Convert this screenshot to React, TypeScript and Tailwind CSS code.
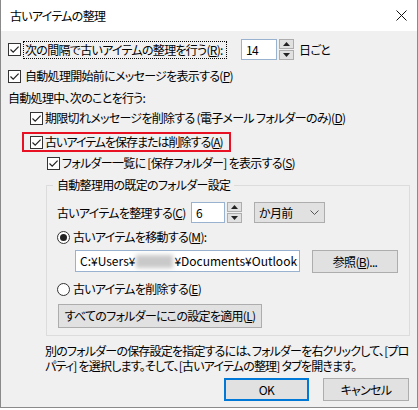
import React from "react"

const font = "font-['Noto_Sans_CJK_JP',sans-serif] [font-feature-settings:'palt'] tracking-[-0.7px] whitespace-nowrap"

function Check() {
  return (
    <span className="flex h-[13px] w-[13px] shrink-0 items-center justify-center border border-[#333] bg-white">
      <svg width="11" height="11" viewBox="0 0 11 11">
        <path d="M1.5 5.5 L4.2 8.2 L9.6 2.6" stroke="#222" strokeWidth="1.2" fill="none" />
      </svg>
    </span>
  )
}

function Radio({ on }: { on?: boolean }) {
  return (
    <span className="flex h-[13px] w-[13px] shrink-0 items-center justify-center rounded-full border border-[#333] bg-white">
      {on && <span className="h-[7px] w-[7px] rounded-full bg-[#222]" />}
    </span>
  )
}

function Spin() {
  return (
    <div className="ml-[2px] flex flex-col gap-[1px]">
      <span className="flex h-[10px] w-[15px] items-center justify-center border border-[#adadad] bg-[#e1e1e1]">
        <svg width="7" height="4" viewBox="0 0 7 4">
          <path d="M0 4 L3.5 0 L7 4 Z" fill="#222" />
        </svg>
      </span>
      <span className="flex h-[10px] w-[15px] items-center justify-center border border-[#adadad] bg-[#e1e1e1]">
        <svg width="7" height="4" viewBox="0 0 7 4">
          <path d="M0 0 L3.5 4 L7 0 Z" fill="#222" />
        </svg>
      </span>
    </div>
  )
}

export default function App() {
  return (
    <div className={`h-[410px] w-[418px] bg-white text-[12px] leading-[18px] text-black ${font}`}>
      <div className="h-[408px] border-x border-b border-[#8a8a8a] bg-[#f0f0f0]">
        <div className="flex h-[31px] items-center justify-between bg-white pl-[9px] pr-[10px]">
          <span>古いアイテムの整理</span>
          <svg width="11" height="11" viewBox="0 0 11 11">
            <path d="M0.5 0.5 L10.5 10.5 M10.5 0.5 L0.5 10.5" stroke="#111" strokeWidth="1" />
          </svg>
        </div>

        <div className="pl-[7px]">
          <div className="mt-[8px] flex h-[21px] items-center">
            <Check />
            <span className="ml-[2px] flex h-[18px] w-[204px] items-center border border-dotted border-black pl-[1px]">
              次の間隔で古いアイテムの整理を行う(<u>R</u>):
            </span>
            <span className="ml-[14px] flex h-[21px] w-[36px] items-center border border-[#98b2d0] bg-white pl-[4px]">14</span>
            <Spin />
            <span className="ml-[5px]">日ごと</span>
          </div>

          <div className="mt-[7px] flex h-[18px] items-center gap-[4px]">
            <Check />
            <span>自動処理開始前にメッセージを表示する(<u>P</u>)</span>
          </div>

          <div className="mt-[4px] flex h-[18px] items-center">自動処理中、次のことを行う:</div>

          <div className="ml-[22px] mt-[2px] flex h-[18px] items-center gap-[2px]">
            <Check />
            <span>期限切れメッセージを削除する (電子メール フォルダーのみ)(<u>D</u>)</span>
          </div>

          <div className="ml-[14px] mt-[5px] flex h-[20px] w-[209px] items-center gap-[2px] border-2 border-[#e81123] pl-[6px]">
            <Check />
            <span className="tracking-[-1px]">古いアイテムを保存または削除する(<u>A</u>)</span>
          </div>

          <div className="ml-[39px] mt-[2px] flex h-[18px] items-center gap-[2px]">
            <Check />
            <span>フォルダー一覧に [保存フォルダー] を表示する(<u>S</u>)</span>
          </div>

          <fieldset className="ml-[38px] mt-[4px] w-[364px] border border-[#dcdcdc] pb-[7px] pl-[10px]">
            <legend className="-ml-[4px] px-[4px] leading-[18px]">自動整理用の既定のフォルダー設定</legend>

            <div className="mt-[8px] flex h-[21px] items-center">
              <span className="w-[134px]">
                古いアイテムを整理する(<u>C</u>)
              </span>
              <span className="flex h-[21px] w-[34px] items-center border border-[#98b2d0] bg-white pl-[4px]">6</span>
              <Spin />
              <span className="ml-[12px] flex h-[21px] w-[71px] items-center justify-between border border-[#adadad] bg-[#e1e1e1] pl-[4px] pr-[5px]">
                か月前
                <svg width="9" height="5" viewBox="0 0 9 5">
                  <path d="M0.5 0.5 L4.5 4.5 L8.5 0.5" stroke="#555" strokeWidth="1" fill="none" />
                </svg>
              </span>
            </div>

            <div className="mt-[5px] flex h-[18px] items-center gap-[3px]">
              <Radio on />
              <span>古いアイテムを移動する(<u>M</u>):</span>
            </div>

            <div className="mt-[4px] flex h-[24px] items-start">
              <div className="ml-[18px] flex h-[22px] w-[225px] items-center overflow-hidden border border-[#98b2d0] bg-white pl-[4px] tracking-[0px]">
                <span>C:¥Users¥</span>
                <span className="mx-[1px] h-[13px] w-[37px] shrink-0 bg-[#c9c9c9] blur-[2px]" />
                <span>¥Documents¥Outlook</span>
              </div>
              <span className="ml-[12px] flex h-[23px] w-[86px] items-center justify-center border border-[#adadad] bg-[#e1e1e1]">
                参照(<u>B</u>)...
              </span>
            </div>

            <div className="mt-[6px] flex h-[18px] items-center gap-[3px]">
              <Radio />
              <span>古いアイテムを削除する(<u>E</u>)</span>
            </div>

            <div className="ml-[1px] mt-[6px] flex h-[24px] w-[204px] items-center justify-center border border-[#adadad] bg-[#e1e1e1]">
              すべてのフォルダーにこの設定を適用(<u>L</u>)
            </div>
          </fieldset>

          <p className="ml-[37px] mt-[7px] leading-[15px] tracking-[-0.8px]">
            別のフォルダーの保存設定を指定するには、フォルダーを右クリックして、[プロ
            <br />
            パティ] を選択します。そして、[古いアイテムの整理] タブを開きます。
          </p>

          <div className="mt-[5px] flex justify-end gap-[14px] pr-[8px]">
            <span className="flex h-[23px] w-[85px] items-center justify-center border-2 border-[#0078d7] bg-[#e1e1e1]">OK</span>
            <span className="flex h-[23px] w-[86px] items-center justify-center border border-[#adadad] bg-[#e1e1e1]">キャンセル</span>
          </div>
        </div>
      </div>
    </div>
  )
}
